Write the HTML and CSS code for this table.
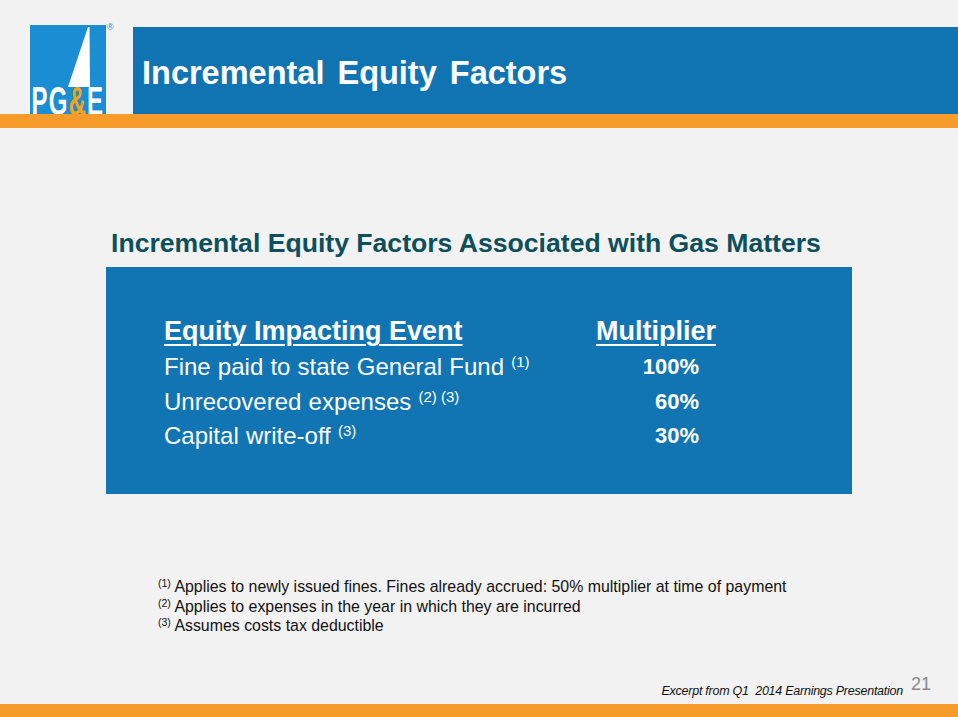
FILE: index.html
```html
<!DOCTYPE html>
<html lang="en">
<head>
<meta charset="utf-8">
<title>Incremental Equity Factors</title>
<link rel="stylesheet" href="styles.css">
</head>
<body>
<div class="page">
  <header>
    <div class="top">
      <div class="logo">
        <svg class="logo-mark" width="76" height="89" viewBox="0 0 76 89" aria-label="PG&amp;E">
          <rect width="76" height="89" fill="#1b8dd3"/>
          <polygon points="58,2 59.5,2 60,62 38,62" fill="#ffffff"/>
          <g transform="translate(1.5 90) scale(0.585 1)">
            <text x="0" y="0" font-family="Liberation Sans, Arial, sans-serif" font-weight="bold" font-size="41" letter-spacing="2" fill="#ffffff">PG<tspan fill="#f7a11a">&amp;</tspan>E</text>
          </g>
        </svg>
        <span class="reg">®</span>
      </div>
      <div class="title-bar">
        <h1>Incremental Equity Factors</h1>
      </div>
    </div>
    <div class="accent"></div>
  </header>

  <main>
    <h2 class="subtitle">Incremental Equity Factors Associated with Gas Matters</h2>
    <section class="panel">
      <div class="factors">
        <div class="head">Equity Impacting Event</div>
        <div class="head">Multiplier</div>

        <div class="event">Fine paid to state General Fund <sup>(1)</sup></div>
        <div class="value">100%</div>

        <div class="event">Unrecovered expenses <sup>(2) (3)</sup></div>
        <div class="value">60%</div>

        <div class="event">Capital write-off <sup>(3)</sup></div>
        <div class="value">30%</div>
      </div>
    </section>

    <ol class="notes">
      <li><sup>(1)</sup> Applies to newly issued fines. Fines already accrued: 50% multiplier at time of payment</li>
      <li><sup>(2)</sup> Applies to expenses in the year in which they are incurred</li>
      <li><sup>(3)</sup> Assumes costs tax deductible</li>
    </ol>
  </main>

  <footer>
    <div class="foot">
      <span class="source">Excerpt from Q1&nbsp; 2014 Earnings Presentation</span>
      <span class="page-num">21</span>
    </div>
    <div class="accent bottom"></div>
  </footer>
</div>
</body>
</html>
```

FILE: styles.css
```css
html, body {
  margin: 0;
  padding: 0;
}

body {
  background: #f2f2f2;
  font-family: "Liberation Sans", Arial, sans-serif;
  color: #111;
}

.page {
  width: 958px;
  height: 717px;
  display: flex;
  flex-direction: column;
  overflow: hidden;
}

/* ---------- header ---------- */
.top {
  display: flex;
  align-items: flex-end;
  height: 114px;
}

.logo {
  display: flex;
  align-items: flex-start;
  margin-left: 30px;
  width: 103px;
  height: 89px;
}

.logo-mark {
  display: block;
  flex: none;
  overflow: hidden;
}

.reg {
  margin-left: 1px;
  margin-top: -2px;
  font-size: 9px;
  line-height: 9px;
  color: #1b8dd3;
}

.title-bar {
  flex: 1;
  height: 87px;
  background: #1174b2;
  display: flex;
  align-items: center;
  padding-left: 9px;
}

.title-bar h1 {
  margin: 0;
  padding-top: 4px;
  color: #ffffff;
  font-size: 32.5px;
  font-weight: bold;
  word-spacing: 4px;
  line-height: 36px;
}

.accent {
  height: 14px;
  background: #f79c2b;
}

/* ---------- main ---------- */
main {
  flex: 1;
  padding-left: 106px;
}

.subtitle {
  margin: 99px 0 0 5px;
  font-size: 26.6px;
  line-height: 32px;
  font-weight: bold;
  color: #0c4f5d;
}

.panel {
  box-sizing: border-box;
  margin-top: 8px;
  width: 746px;
  height: 227px;
  background: #1175b3;
  padding: 46px 0 0 58px;
  color: #ffffff;
}

.factors {
  display: grid;
  grid-template-columns: 432px 122px;
}

.head {
  font-size: 27px;
  font-weight: bold;
  line-height: 37px;
  text-decoration: underline;
  text-decoration-thickness: 2px;
  text-underline-offset: 4px;
}

.event {
  font-size: 24px;
  line-height: 34.5px;
  word-spacing: 0.5px;
}

.event sup {
  font-size: 15px;
  vertical-align: 8px;
  line-height: 0;
  word-spacing: 0;
}

.value {
  font-size: 22px;
  font-weight: bold;
  line-height: 34.5px;
  text-align: right;
  padding-right: 19px;
}

.notes {
  list-style: none;
  margin: 83px 0 0 52px;
  padding: 0;
  font-size: 15.9px;
  line-height: 19.5px;
  color: #111;
}

.notes sup {
  font-size: 10.5px;
  vertical-align: 5px;
  line-height: 0;
}

/* ---------- footer ---------- */
.foot {
  display: flex;
  justify-content: flex-end;
  align-items: flex-end;
  gap: 8px;
  padding: 0 27px 5px 0;
}

.source {
  font-size: 12.5px;
  font-style: italic;
  letter-spacing: -0.25px;
  line-height: 15px;
  color: #111;
}

.page-num {
  font-size: 18px;
  line-height: 18px;
  margin-bottom: 6px;
  color: #8a8a8a;
}

.accent.bottom {
  height: 13px;
}
```
